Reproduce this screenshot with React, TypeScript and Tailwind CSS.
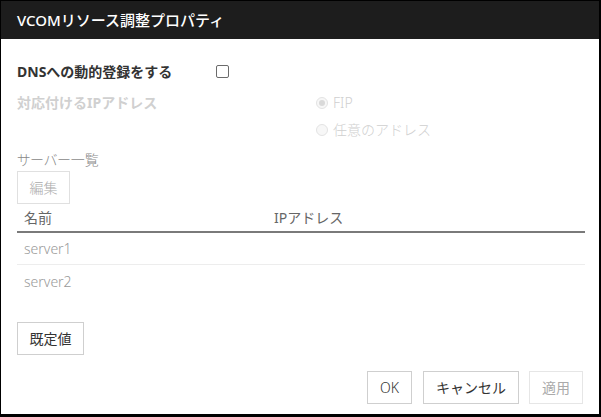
import React from "react";

const font = "font-['Noto_Sans','Noto_Sans_CJK_JP',sans-serif]";

function Radio({ checked, label }: { checked?: boolean; label: string }) {
  return (
    <div className="flex h-[27px] items-center gap-[5px]">
      <span className="flex h-[12px] w-[12px] items-center justify-center rounded-full border border-[#e3e3e3] bg-[#f7f7f7]">
        {checked && <span className="h-[6px] w-[6px] rounded-full bg-[#d9d9d9]" />}
      </span>
      <span className="text-[14px] font-light text-[#cfcfcf]">{label}</span>
    </div>
  );
}

export default function App() {
  const servers = ["server1", "server2"];

  return (
    <div className={`h-[417px] w-[601px] bg-black pl-px pt-px ${font}`}>
      <div className="flex h-[413px] w-[598px] flex-col bg-white">
        {/* title */}
        <div className="flex h-[38px] shrink-0 items-center bg-[#1d1d1d] px-[16px]">
          <span className="text-[15px] font-medium text-white">VCOMリソース調整プロパティ</span>
        </div>

        <div className="flex flex-1 flex-col px-[16px] pt-[18px]">
          {/* DNS */}
          <div className="flex h-[28px] items-center">
            <span className="w-[199px] text-[14px] font-bold text-[#333]">DNSへの動的登録をする</span>
            <span className="h-[13px] w-[13px] rounded-[2px] border border-[#6b6b6b] bg-white" />
          </div>

          {/* IP */}
          <div className="mt-[4px] flex">
            <span className="flex h-[27px] w-[299px] items-center text-[14px] font-bold text-[#d0d0d0]">
              対応付けるIPアドレス
            </span>
            <div className="flex flex-col">
              <Radio checked label="FIP" />
              <Radio label="任意のアドレス" />
            </div>
          </div>

          {/* server list */}
          <div className="mt-[6px] flex h-[20px] items-center text-[14px] font-light text-[#888] [font-feature-settings:'palt']">
            サーバー一覧
          </div>
          <button className="mt-[2px] h-[33px] w-[53px] border border-[#e0e0e0] bg-white text-[14px] font-light text-[#aaa]">
            編集
          </button>

          <div className="w-[568px]">
            <div className="flex h-[29px] items-center border-b-2 border-[#7a7a7a] text-[14px] text-[#666]">
              <span className="w-[250px] pl-[7px]">名前</span>
              <span className="pl-[7px]">IPアドレス</span>
            </div>
            {servers.map((s, i) => (
              <div
                key={s}
                className={`flex h-[32px] items-center text-[14px] font-light text-[#999] ${i === 0 ? "border-b border-[#ededed]" : ""}`}
              >
                <span className="w-[250px] pl-[7px]">{s}</span>
                <span className="pl-[7px]" />
              </div>
            ))}
          </div>

          <button className="mt-[25px] h-[33px] w-[67px] border border-[#cfcfcf] bg-white text-[14px] text-[#333]">
            既定値
          </button>

          <div className="mt-[16px] flex justify-end gap-[11px]">
            <button className="h-[33px] w-[45px] border border-[#cfcfcf] bg-white text-[14px] font-light text-[#333]">OK</button>
            <button className="h-[33px] w-[96px] border border-[#cfcfcf] bg-white text-[14px] text-[#333]">
              キャンセル
            </button>
            <button className="-ml-[1px] h-[33px] w-[54px] border border-[#e6e6e6] bg-white text-[14px] text-[#aaa]">
              適用
            </button>
          </div>
        </div>
      </div>
    </div>
  );
}
